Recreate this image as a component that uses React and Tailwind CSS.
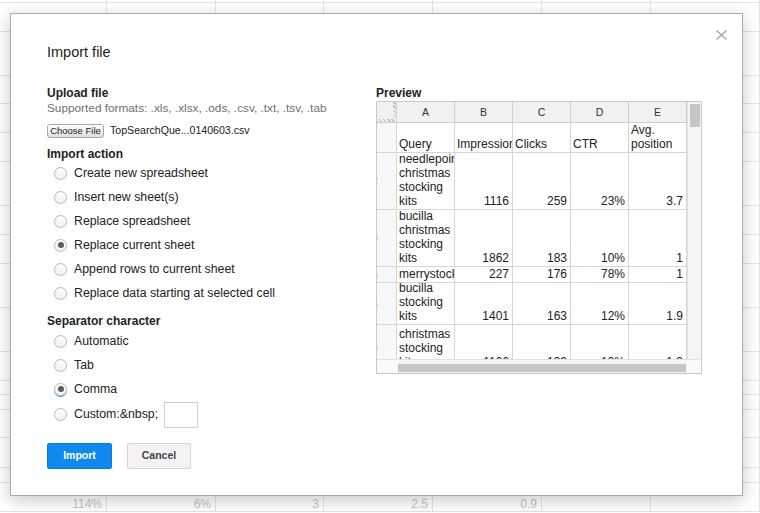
import React from "react";

const bgRowClasses = [
  "h-[3px]", "h-[29px]", "h-[44px]", "h-[28px]", "h-[29px]", "h-[29px]",
  "h-[44px]", "h-[29px]", "h-[29px]", "h-[44px]", "h-[44px]", "h-[29px]",
  "h-[14px]", "h-[15px]", "h-[28px]", "h-[30px]", "h-[15px]", "h-[29px]",
];
const bgColClasses = ["w-[107px]", "w-[109px]", "w-[108px]", "w-[109px]", "w-[109px]", "w-[109px]", "w-[109px]"];
const lastRowText = ["114%", "6%", "3", "2.5", "0.9", "", ""];

function Background() {
  return (
    <div className="flex flex-col">
      {bgRowClasses.map((h, ri) => (
        <div key={ri} className={`flex ${h}`}>
          {bgColClasses.map((w, ci) => (
            <div
              key={ci}
              className={`${w} h-full border-r border-b border-[#e4e4e4] flex items-end justify-end pr-[4px] text-[12px] leading-[14px] text-[#c4c4c4]`}
            >
              {ri === bgRowClasses.length - 1 ? lastRowText[ci] : ""}
            </div>
          ))}
        </div>
      ))}
    </div>
  );
}

function Radio({ label, checked, focus, children }) {
  return (
    <div className="flex items-center h-[24px]">
      <span
        className={`ml-[7px] w-[13px] h-[13px] rounded-full border border-[#b9b9b9] bg-gradient-to-b from-white to-[#f1f1f1] flex items-center justify-center ${
          focus ? "shadow-[0_1px_0_#2f8cf0]" : ""
        }`}
      >
        {checked && <span className="w-[6px] h-[6px] rounded-full bg-[#5c5c5c]" />}
      </span>
      <span className="ml-[7px] text-[12.3px] leading-[15px] text-[#222]">{label}</span>
      {children}
    </div>
  );
}

const rowHeights = ["h-[30px]", "h-[57px]", "h-[57px]", "h-[16px]", "h-[42px]", "h-[46px]"];
const rows = [
  ["", ["Query", "Impressions", "Clicks", "CTR", "Avg. position"], false],
  ["2", ["needlepoint christmas stocking kits", "1116", "259", "23%", "3.7"], true],
  ["3", ["bucilla christmas stocking kits", "1862", "183", "10%", "1"], true],
  ["4", ["merrystockings", "227", "176", "78%", "1"], true],
  ["5", ["bucilla stocking kits", "1401", "163", "12%", "1.9"], true],
  ["6", ["christmas stocking kits", "1106", "139", "13%", "1.3"], true],
];

function Preview() {
  return (
    <div className="w-[326px] h-[273px] border border-[#c9c9c9] flex flex-col bg-white">
      <div className="flex h-[257px]">
        <div className="w-[310px] h-full overflow-hidden flex flex-col text-[12px] leading-[14px] text-[#222]">
          <div className="flex h-[21px] shrink-0">
            <div className="w-[20px] h-full border-r border-b border-[#cfcfcf] bg-[#f1f1f1] flex flex-col">
              <div className="flex flex-1">
                <div className="flex-1" />
                <div className="w-[3px] bg-[image:repeating-linear-gradient(45deg,#b8b8b8_0_1px,transparent_1px_3px)]" />
              </div>
              <div className="h-[3px] bg-[image:repeating-linear-gradient(45deg,#b8b8b8_0_1px,transparent_1px_3px)]" />
            </div>
            {["A", "B", "C", "D", "E"].map((l) => (
              <div
                key={l}
                className="w-[58px] h-full border-r border-b border-[#cfcfcf] bg-[#f1f1f1] flex items-center justify-center text-[10.5px] text-[#333]"
              >
                {l}
              </div>
            ))}
          </div>
          {rows.map(([num, cells, numeric], ri) => (
            <div key={ri} className={`flex shrink-0 ${rowHeights[ri]}`}>
              <div className="w-[20px] h-full border-r border-b border-[#d6d6d6] bg-[#f8f8f8] overflow-hidden flex items-center">
                <span className="-ml-[5px] text-[10px] text-[#444]">{num}</span>
              </div>
              {cells.map((c, ci) => (
                <div
                  key={ci}
                  className={`w-[58px] h-full border-r border-b border-[#d6d6d6] overflow-hidden flex items-end pb-[1px] ${
                    numeric && ci > 0 ? "pr-[3px] pl-[2px]" : "pl-[2px] pr-[1px]"
                  }`}
                >
                  <div className={`w-full ${numeric && ci > 0 ? "text-right" : "text-left"}`}>{c}</div>
                </div>
              ))}
            </div>
          ))}
        </div>
        <div className="w-[14px] h-full bg-[#f5f5f5] border-l border-[#e2e2e2]">
          <div className="mt-[2px] ml-[2px] w-[10px] h-[23px] bg-[#c6c6c6]" />
        </div>
      </div>
      <div className="flex h-[14px] border-t border-[#e2e2e2] bg-[#f5f5f5]">
        <div className="w-[21px] h-full bg-[#fafafa]" />
        <div className="w-[289px] h-full">
          <div className="mt-[4px] w-[288px] h-[8px] bg-[#c6c6c6]" />
        </div>
        <div className="w-[14px] h-full bg-[#fafafa]" />
      </div>
    </div>
  );
}

export default function App() {
  return (
    <div className="relative w-[760px] h-[513px] overflow-hidden bg-white font-['Liberation_Sans',Arial,sans-serif]">
      <Background />
      <div className="absolute left-[10px] top-[13px] w-[733px] h-[483px] bg-white border border-[#ababab] shadow-[0_4px_16px_rgba(0,0,0,0.22)] pl-[36px] pt-[28px]">
        <button className="absolute right-[15px] top-[16px] w-[11px] h-[10px] flex items-center justify-center">
          <svg width="11" height="10" viewBox="0 0 11 10">
            <path d="M1 1 L10 9 M10 1 L1 9" stroke="#a8a8a8" strokeWidth="1.5" strokeLinecap="square" />
          </svg>
        </button>
        <div className="text-[14.5px] leading-[20px] text-[#222]">Import file</div>
        <div className="flex mt-[24px]">
          <div className="w-[329px] flex flex-col">
            <div className="text-[12px] leading-[15px] font-bold text-[#222]">Upload file</div>
            <div className="text-[11.8px] leading-[15px] text-[#707070]">
              Supported formats: .xls, .xlsx, .ods, .csv, .txt, .tsv, .tab
            </div>
            <div className="flex items-center mt-[8px] h-[14px]">
              <div className="w-[57px] h-[14px] rounded-[3px] border border-[#a9a9a9] bg-gradient-to-b from-white to-[#dedede] flex items-center justify-center text-[9.5px] text-[#222]">
                Choose File
              </div>
              <span className="ml-[6px] text-[10.6px] text-[#222]">TopSearchQue...0140603.csv</span>
            </div>
            <div className="mt-[10px] text-[12px] leading-[13px] font-bold text-[#222]">Import action</div>
            <Radio label="Create new spreadsheet" />
            <Radio label="Insert new sheet(s)" />
            <Radio label="Replace spreadsheet" />
            <Radio label="Replace current sheet" checked />
            <Radio label="Append rows to current sheet" />
            <Radio label="Replace data starting at selected cell" />
            <div className="mt-[9px] text-[12px] leading-[15px] font-bold text-[#222]">Separator character</div>
            <Radio label="Automatic" />
            <Radio label="Tab" />
            <Radio label="Comma" checked focus />
            <div className="h-[27px] flex items-center">
              <Radio label={"Custom:&nbsp;"}>
                <div className="ml-[6px] w-[34px] h-[26px] border border-[#d0d0d0] bg-white" />
              </Radio>
            </div>
            <div className="flex mt-[15px]">
              <button className="w-[65px] h-[26px] bg-[#1089ef] border border-[#0c7ad8] rounded-[2px] text-white font-bold text-[10.5px]">
                Import
              </button>
              <button className="ml-[15px] w-[64px] h-[26px] bg-[#f3f3f3] border border-[#d4d4d4] rounded-[2px] text-[#444] font-bold text-[10.5px]">
                Cancel
              </button>
            </div>
          </div>
          <div className="flex flex-col">
            <div className="text-[12px] leading-[15px] font-bold text-[#222]">Preview</div>
            <Preview />
          </div>
        </div>
      </div>
    </div>
  );
}
